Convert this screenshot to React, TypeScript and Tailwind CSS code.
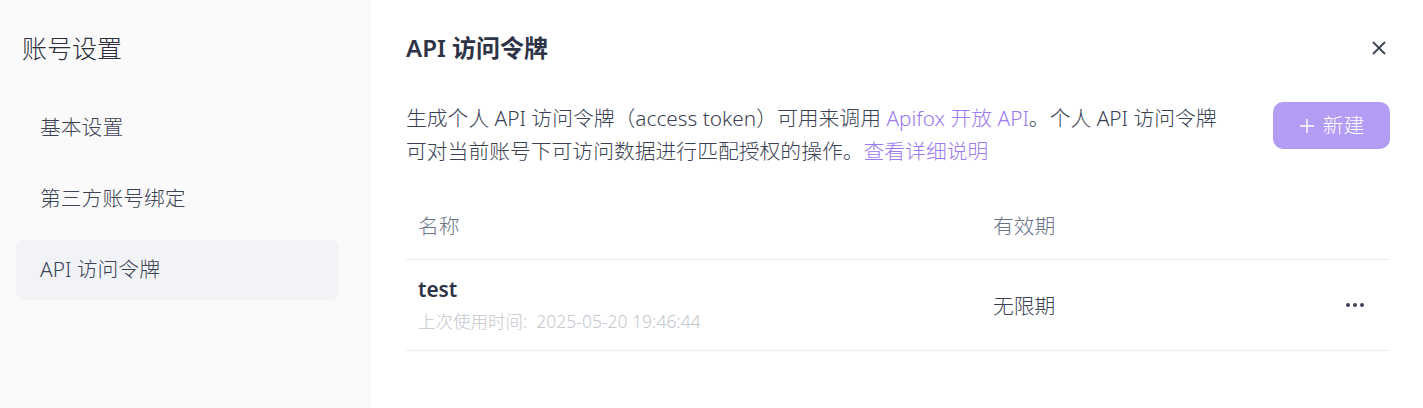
import React from "react";

const font = { fontFamily: '"Noto Sans", "Noto Sans CJK SC", sans-serif' };

export default function App() {
  const items = ["基本设置", "第三方账号绑定", "API 访问令牌"];
  return (
    <div className="flex h-[408px] w-[1423px] bg-white text-[#3b4254] font-light" style={font}>
      <aside className="flex w-[370px] shrink-0 flex-col border-r border-[#f0f0f2] bg-[#fafafa] px-4">
        <h1 className="mt-[30px] h-[36px] pl-[6px] text-[25px] leading-[36px] text-[#2b2f3a]">账号设置</h1>
        <nav className="mt-[32px] flex w-[323px] flex-col gap-[11px]">
          {items.map((t, i) => (
            <div
              key={t}
              className={`flex h-[60px] items-center rounded-[8px] pl-6 text-[20.8px] text-[#3b4254] ${
                i === 2 ? "bg-[#f2f3f7]" : ""
              }`}
            >
              {t}
            </div>
          ))}
        </nav>
      </aside>
      <main className="flex flex-1 flex-col pl-[36px] pr-[33px] pt-[30px]">
        <div className="flex h-[36px] items-center justify-between">
          <h2 className="text-[24px] font-semibold leading-[36px] text-[#2e3345]">API 访问令牌</h2>
          <svg width="14" height="14" viewBox="0 0 14 14" className="mr-[4px]">
            <path d="M1.5 1.5 L12.5 12.5 M12.5 1.5 L1.5 12.5" stroke="#3b4254" strokeWidth="1.8" strokeLinecap="round" />
          </svg>
        </div>
        <div className="mt-[36px] flex items-start justify-between">
          <p className="text-[20.8px] leading-[33px] text-[#3b4254]">
            生成个人 API 访问令牌（access token）可用来调用 <span className="text-[#9b7bef]">Apifox 开放 API</span>。个人 API 访问令牌
            <br />
            可对当前账号下可访问数据进行匹配授权的操作。<span className="text-[#9b7bef]">查看详细说明</span>
          </p>
          <button className="flex h-[47px] w-[117px] items-center justify-center gap-2 rounded-[10px] bg-[#b39cf3] text-[20.8px] text-white">
            <svg width="16" height="16" viewBox="0 0 16 16">
              <path d="M8 1 V15 M1 8 H15" stroke="white" strokeWidth="1.4" />
            </svg>
            新建
          </button>
        </div>
        <div className="mt-[27px]">
          <div className="flex h-[65px] items-center border-b border-[#ececef] text-[20.8px] text-[#6b7386]">
            <div className="w-[587px] pl-[12px]">名称</div>
            <div className="flex-1">有效期</div>
          </div>
          <div className="flex h-[91px] items-center border-b border-[#ececef]">
            <div className="flex w-[587px] flex-col pl-[12px]">
              <div className="text-[20.8px] font-semibold leading-[30px] text-[#2e3345]">test</div>
              <div className="mt-[2px] text-[17.5px] leading-[30px] text-[#c4c7cd]">上次使用时间:&nbsp; 2025-05-20 19:46:44</div>
            </div>
            <div className="mt-[4px] flex-1 text-[20.8px] text-[#3b4254]">无限期</div>
            <div className="mr-[26px] flex gap-[3px]">
              <span className="h-[4px] w-[4px] rounded-full bg-[#3b4254]" />
              <span className="h-[4px] w-[4px] rounded-full bg-[#3b4254]" />
              <span className="h-[4px] w-[4px] rounded-full bg-[#3b4254]" />
            </div>
          </div>
        </div>
      </main>
    </div>
  );
}
